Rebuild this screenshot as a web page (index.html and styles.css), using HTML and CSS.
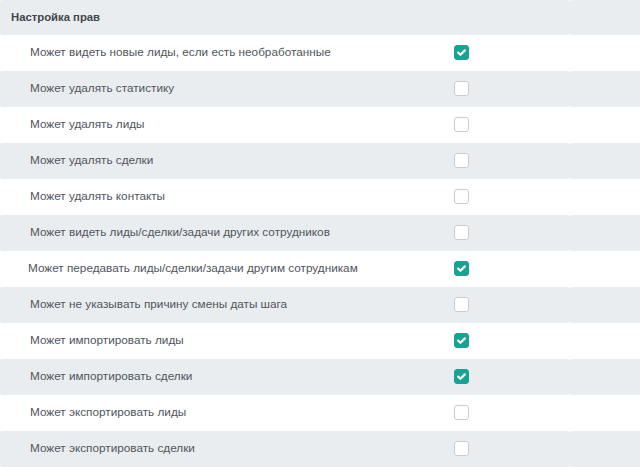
FILE: index.html
```html
<!DOCTYPE html>
<html lang="ru">
<head>
  <meta charset="UTF-8">
  <title>Настройка прав</title>
  <link rel="stylesheet" href="styles.css">
</head>
<body>
  <div class="rights">
    <div class="row row-head">
      <div class="cell cell-main"><span class="head-title">Настройка прав</span></div>
      <div class="cell cell-rest"></div>
    </div>

    <div class="row">
      <div class="cell cell-main">
        <span class="label">Может видеть новые лиды, если есть необработанные</span>
        <span class="box checked"><svg viewBox="0 0 15 15"><path d="M4.2 7.6l2.2 2.2 4.4-4.4"/></svg></span>
      </div>
      <div class="cell cell-rest"></div>
    </div>
    <div class="row">
      <div class="cell cell-main">
        <span class="label">Может удалять статистику</span>
        <span class="box"></span>
      </div>
      <div class="cell cell-rest"></div>
    </div>
    <div class="row">
      <div class="cell cell-main">
        <span class="label">Может удалять лиды</span>
        <span class="box"></span>
      </div>
      <div class="cell cell-rest"></div>
    </div>
    <div class="row">
      <div class="cell cell-main">
        <span class="label">Может удалять сделки</span>
        <span class="box"></span>
      </div>
      <div class="cell cell-rest"></div>
    </div>
    <div class="row">
      <div class="cell cell-main">
        <span class="label">Может удалять контакты</span>
        <span class="box"></span>
      </div>
      <div class="cell cell-rest"></div>
    </div>
    <div class="row">
      <div class="cell cell-main">
        <span class="label">Может видеть лиды/сделки/задачи других сотрудников</span>
        <span class="box"></span>
      </div>
      <div class="cell cell-rest"></div>
    </div>
    <div class="row">
      <div class="cell cell-main">
        <span class="label label-wide">Может передавать лиды/сделки/задачи другим сотрудникам</span>
        <span class="box checked"><svg viewBox="0 0 15 15"><path d="M4.2 7.6l2.2 2.2 4.4-4.4"/></svg></span>
      </div>
      <div class="cell cell-rest"></div>
    </div>
    <div class="row">
      <div class="cell cell-main">
        <span class="label">Может не указывать причину смены даты шага</span>
        <span class="box"></span>
      </div>
      <div class="cell cell-rest"></div>
    </div>
    <div class="row">
      <div class="cell cell-main">
        <span class="label">Может импортировать лиды</span>
        <span class="box checked"><svg viewBox="0 0 15 15"><path d="M4.2 7.6l2.2 2.2 4.4-4.4"/></svg></span>
      </div>
      <div class="cell cell-rest"></div>
    </div>
    <div class="row">
      <div class="cell cell-main">
        <span class="label">Может импортировать сделки</span>
        <span class="box checked"><svg viewBox="0 0 15 15"><path d="M4.2 7.6l2.2 2.2 4.4-4.4"/></svg></span>
      </div>
      <div class="cell cell-rest"></div>
    </div>
    <div class="row">
      <div class="cell cell-main">
        <span class="label">Может экспортировать лиды</span>
        <span class="box"></span>
      </div>
      <div class="cell cell-rest"></div>
    </div>
    <div class="row">
      <div class="cell cell-main">
        <span class="label">Может экспортировать сделки</span>
        <span class="box"></span>
      </div>
      <div class="cell cell-rest"></div>
    </div>
  </div>
</body>
</html>
```

FILE: styles.css
```css
body {
  margin: 0;
  font-family: "Liberation Sans", Arial, sans-serif;
  font-size: 11.75px;
  color: #50555c;
  background: #fff;
}
.rights {
  width: 640px;
  overflow: hidden;
}
.row {
  display: flex;
  height: 36px;
}
.row-head {
  height: 35px;
}
.row:nth-child(odd) .cell {
  background: #eaedf0;
}
.cell {
  display: flex;
  align-items: center;
  border-radius: 2px;
}
.cell-main {
  width: 570px;
  flex: none;
}
.cell-rest {
  flex: 1;
  margin-right: -4px;
}
.head-title {
  padding-left: 11px;
  padding-bottom: 2px;
  font-size: 11.3px;
  font-weight: bold;
  color: #41464c;
}
.label {
  width: 424px;
  padding-left: 30px;
  padding-bottom: 3px;
}
.label-wide {
  width: 426px;
  padding-left: 28px;
}
.box {
  width: 13px;
  height: 13px;
  border: 1px solid #c9cdd2;
  border-radius: 3px;
  background: #fff;
  margin-bottom: 1px;
}
.box.checked {
  background: #17a293;
  border-color: #17a293;
}
.box svg {
  display: block;
  width: 15px;
  height: 15px;
  margin: -1px;
  fill: none;
  stroke: #fff;
  stroke-width: 2.2;
  stroke-linecap: round;
  stroke-linejoin: round;
}
```
